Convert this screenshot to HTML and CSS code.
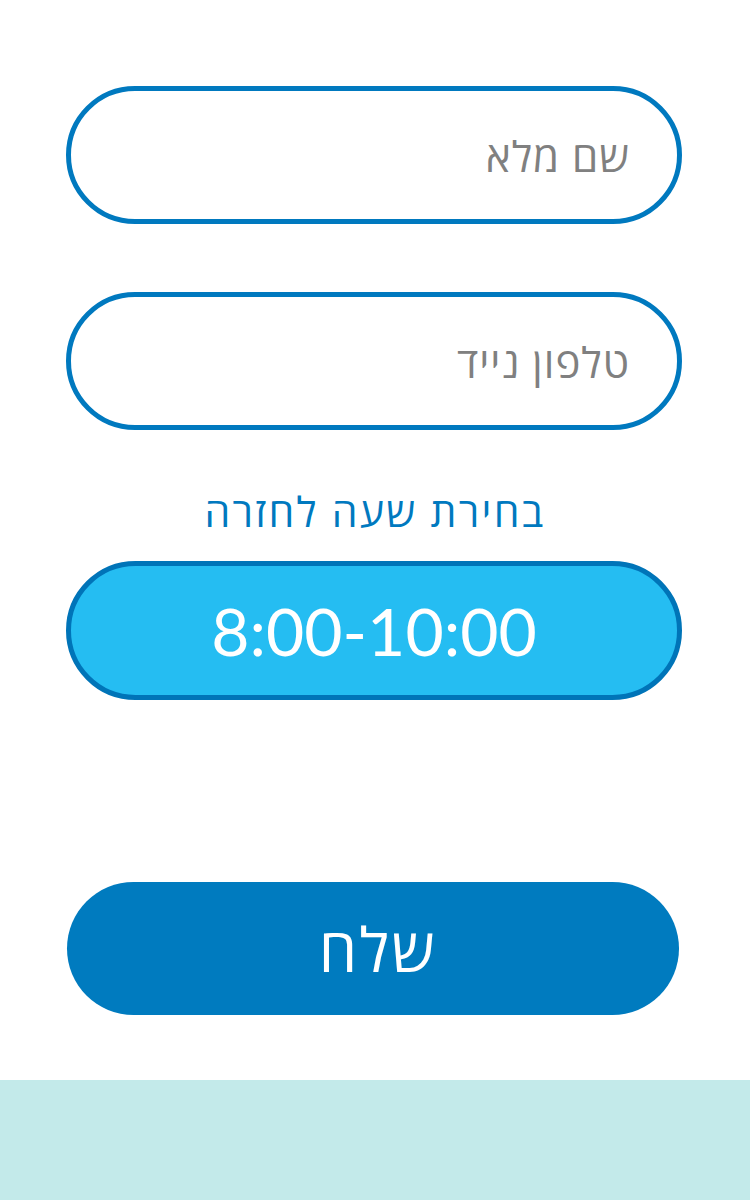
FILE: index.html
```html
<!DOCTYPE html>
<html lang="he" dir="rtl">
<head>
<meta charset="utf-8">
<link rel="stylesheet" href="styles.css">
</head>
<body>
<main class="page">
  <form class="form">
    <input class="field" type="text" placeholder="שם מלא">
    <input class="field field-second" type="tel" placeholder="טלפון נייד">
    <div class="label">בחירת שעה לחזרה</div>
    <div class="time" dir="ltr">8:00-10:00</div>
    <button class="submit" type="button">שלח</button>
  </form>
  <footer class="band"></footer>
</main>
</body>
</html>
```
FILE: styles.css
```css
html, body {
  margin: 0;
  padding: 0;
  background: #ffffff;
}
.page {
  width: 750px;
  height: 1200px;
  display: flex;
  flex-direction: column;
  font-family: Lato, "Open Sans", "Noto Sans", sans-serif;
}
.form {
  flex: 1;
  display: flex;
  flex-direction: column;
  align-items: center;
  padding-top: 86px;
}
.field {
  box-sizing: border-box;
  width: 616px;
  height: 138px;
  margin: 0 2px 0 0;
  border: 5px solid #0079bf;
  border-radius: 69px;
  background: #fff;
  padding: 0 47px 0 20px;
  font-family: "Open Sans", "Noto Sans", sans-serif;
  font-size: 42px;
  letter-spacing: 1px;
  color: #333;
  direction: rtl;
  outline: none;
}
.field::placeholder {
  color: #808080;
  opacity: 1;
}
.field-second {
  margin-top: 68px;
}
.label {
  margin-top: 52px;
  height: 58px;
  line-height: 58px;
  font-family: "Open Sans", "Noto Sans", sans-serif;
  font-size: 41px;
  letter-spacing: 2.3px;
  color: #0079bf;
  text-align: center;
}
.time {
  box-sizing: border-box;
  margin: 21px 2px 0 0;
  width: 616px;
  height: 139px;
  border: 5px solid #0074b8;
  border-radius: 70px;
  background: #25bdf2;
  color: #fff;
  font-family: Lato, sans-serif;
  font-size: 66px;
  display: flex;
  align-items: center;
  justify-content: center;
}
.submit {
  box-sizing: border-box;
  margin: 182px 4px 0 0;
  width: 612px;
  height: 133px;
  border: none;
  border-radius: 67px;
  background: #007bbf;
  color: #fff;
  font-family: "Open Sans", "Noto Sans", sans-serif;
  font-size: 61px;
  letter-spacing: 2.5px;
  padding: 0 0 0 10px;
}
.band {
  height: 120px;
  background: #c3eaea;
}
```
